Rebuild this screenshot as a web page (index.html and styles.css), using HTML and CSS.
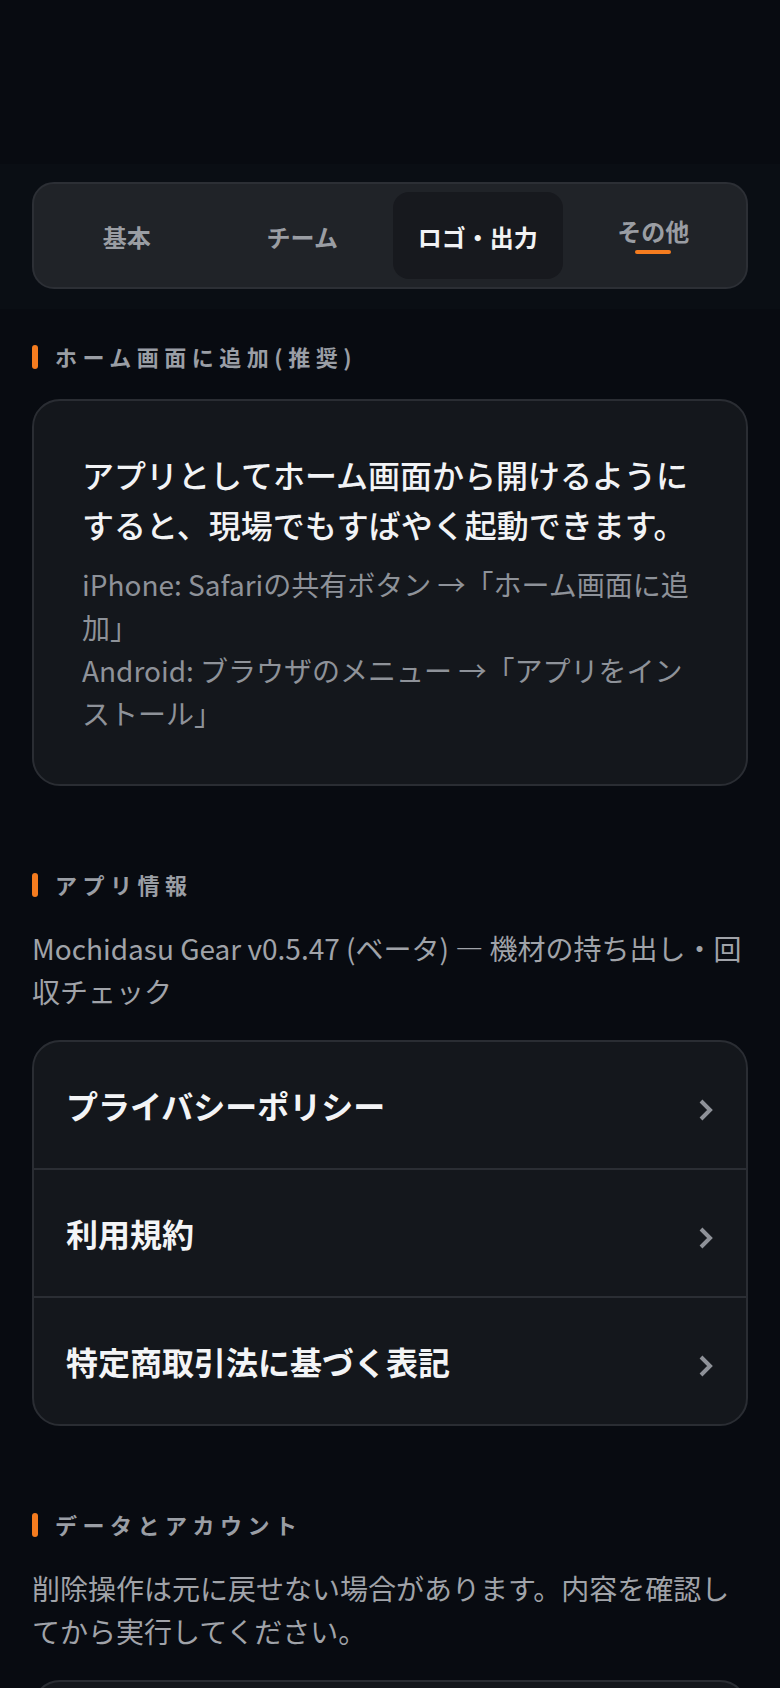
FILE: index.html
```html
<!DOCTYPE html>
<html lang="ja">
<head>
    <meta charset="UTF-8">
    <title>設定 - Mochidasu Gear</title>
    <meta name="viewport" content="width=device-width, initial-scale=1.0">
    <link rel="stylesheet" href="styles.css">
</head>
<body>

<div class="tabs-wrap">
    <nav class="tabs">
        <button class="tab">基本</button>
        <button class="tab">チーム</button>
        <button class="tab tab-hover">ロゴ・出力</button>
        <button class="tab tab-current">その他<span class="tab-line"></span></button>
    </nav>
</div>

<main class="content">
    <section class="section">
        <h2 class="section-title">ホーム画面に追加(推奨)</h2>
        <div class="card card-pad">
            <p class="lead">アプリとしてホーム画面から開けるようにすると、現場でもすばやく起動できます。</p>
            <p class="hint">iPhone: Safariの共有ボタン →「ホーム画面に追加」<br>Android: ブラウザのメニュー →「アプリをインストール」</p>
        </div>
    </section>

    <section class="section">
        <h2 class="section-title">アプリ情報</h2>
        <p class="note">Mochidasu Gear v0.5.47 (ベータ) — 機材の持ち出し・回収チェック</p>
        <div class="card">
            <a class="link-row" href="#">
                <span class="link-label">プライバシーポリシー</span>
                <svg class="chev" width="16" height="22" viewBox="0 0 16 22"><path d="M3 2 L12 11 L3 20" fill="none" stroke="#8e9198" stroke-width="4"/></svg>
            </a>
            <a class="link-row" href="#">
                <span class="link-label">利用規約</span>
                <svg class="chev" width="16" height="22" viewBox="0 0 16 22"><path d="M3 2 L12 11 L3 20" fill="none" stroke="#8e9198" stroke-width="4"/></svg>
            </a>
            <a class="link-row" href="#">
                <span class="link-label">特定商取引法に基づく表記</span>
                <svg class="chev" width="16" height="22" viewBox="0 0 16 22"><path d="M3 2 L12 11 L3 20" fill="none" stroke="#8e9198" stroke-width="4"/></svg>
            </a>
        </div>
    </section>

    <section class="section">
        <h2 class="section-title">データとアカウント</h2>
        <p class="note">削除操作は元に戻せない場合があります。内容を確認してから実行してください。</p>
        <div class="card card-empty"></div>
    </section>
</main>

</body>
</html>
```

FILE: styles.css
```css
body {
    margin: 0;
    background-color: #080b11;
    font-family: "Noto Sans CJK JP", "Noto Sans", sans-serif;
    color: #f2f3f5;
}
.tabs-wrap {
    margin-top: 164px;
    padding: 18px 32px 20px;
    background-color: #0a0e14;
}
.tabs {
    display: grid;
    grid-template-columns: repeat(4, 1fr);
    gap: 6px;
    padding: 8px;
    background-color: #202328;
    border: 2px solid #2c2f35;
    border-radius: 22px;
}
.tab {
    height: 87px;
    display: flex;
    flex-direction: column;
    align-items: center;
    justify-content: center;
    gap: 5px;
    padding: 3px 0 0;
    background: none;
    border: none;
    border-radius: 16px;
    font-family: inherit;
    font-size: 24px;
    font-weight: 700;
    line-height: 1.2;
    color: #9a9da3;
    cursor: pointer;
}
.tab-current {
    padding-top: 0;
}
.tab-hover {
    background-color: #17191e;
    color: #f1f2f4;
}
.tab-line {
    width: 36px;
    height: 4px;
    border-radius: 2px;
    background-color: #f57c1f;
}
.content {
    padding: 0 32px;
}
.section {
    margin-top: 82px;
}
.section:first-child {
    margin-top: 31px;
}
.section-title {
    display: flex;
    align-items: center;
    gap: 17px;
    margin: 0 0 26px;
    font-size: 22px;
    font-weight: 700;
    line-height: 33px;
    letter-spacing: 5.5px;
    color: #9a9ea5;
}
.section-title::before {
    content: "";
    width: 6px;
    height: 24px;
    border-radius: 3px;
    background-color: #f57c1f;
}
.card {
    background-color: #14171c;
    border: 2px solid #2a2d33;
    border-radius: 28px;
    overflow: hidden;
}
.card-pad {
    padding: 48px 48px 49px;
}
.card-empty {
    height: 126px;
}
.lead {
    margin: 0;
    font-size: 32px;
    font-weight: 500;
    line-height: 50px;
    color: #f2f3f5;
}
.hint {
    margin: 14px 0 0;
    font-size: 28px;
    line-height: 43px;
    color: #8e9299;
}
.note {
    margin: 0 0 27px;
    font-size: 28px;
    line-height: 43px;
    color: #a0a3a9;
}
.link-row {
    height: 126px;
    display: flex;
    align-items: center;
    justify-content: space-between;
    padding: 0 32px;
    text-decoration: none;
}
.link-row + .link-row {
    border-top: 2px solid #2b2e34;
}
.link-label {
    font-size: 32px;
    font-weight: 700;
    line-height: 50px;
    color: #f3f4f6;
}
.chev {
    margin-top: 10px;
    flex-shrink: 0;
}
```
